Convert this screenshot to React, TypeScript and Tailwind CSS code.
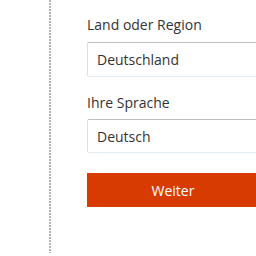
export default function App() {
  return (
    <div className="w-[256px] h-[256px] bg-white flex overflow-hidden" style={{ fontFamily: '"Open Sans", "Noto Sans", sans-serif' }}>
      <div className="ml-[49px] w-[2px] h-[253px] shrink-0 bg-[repeating-linear-gradient(to_bottom,#b4b4b4_0_2px,transparent_2px_3px)]" />
      <div className="ml-[36px] w-[172px] shrink-0 flex flex-col pt-[15px]">
        <div className="text-[14px] leading-[20px] text-[#333333]">Land oder Region</div>
        <div className="mt-[7px] h-[35px] rounded-[2px] border border-[#dedede] border-t-[#bdbdbd] border-b-[#e3ebf2] flex items-center pl-[9px] text-[14px] text-[#333333]">
          Deutschland
        </div>
        <div className="mt-[16px] text-[14px] leading-[20px] text-[#333333]">Ihre Sprache</div>
        <div className="mt-[6px] h-[34px] rounded-[2px] border border-[#dedede] border-t-[#bdbdbd] border-b-[#e3ebf2] flex items-center pl-[9px] text-[14px] text-[#333333]">
          Deutsch
        </div>
        <div className="mt-[20px] h-[34px] bg-[#d83b01] flex items-center justify-center text-[14px] text-white">
          Weiter
        </div>
      </div>
    </div>
  );
}
